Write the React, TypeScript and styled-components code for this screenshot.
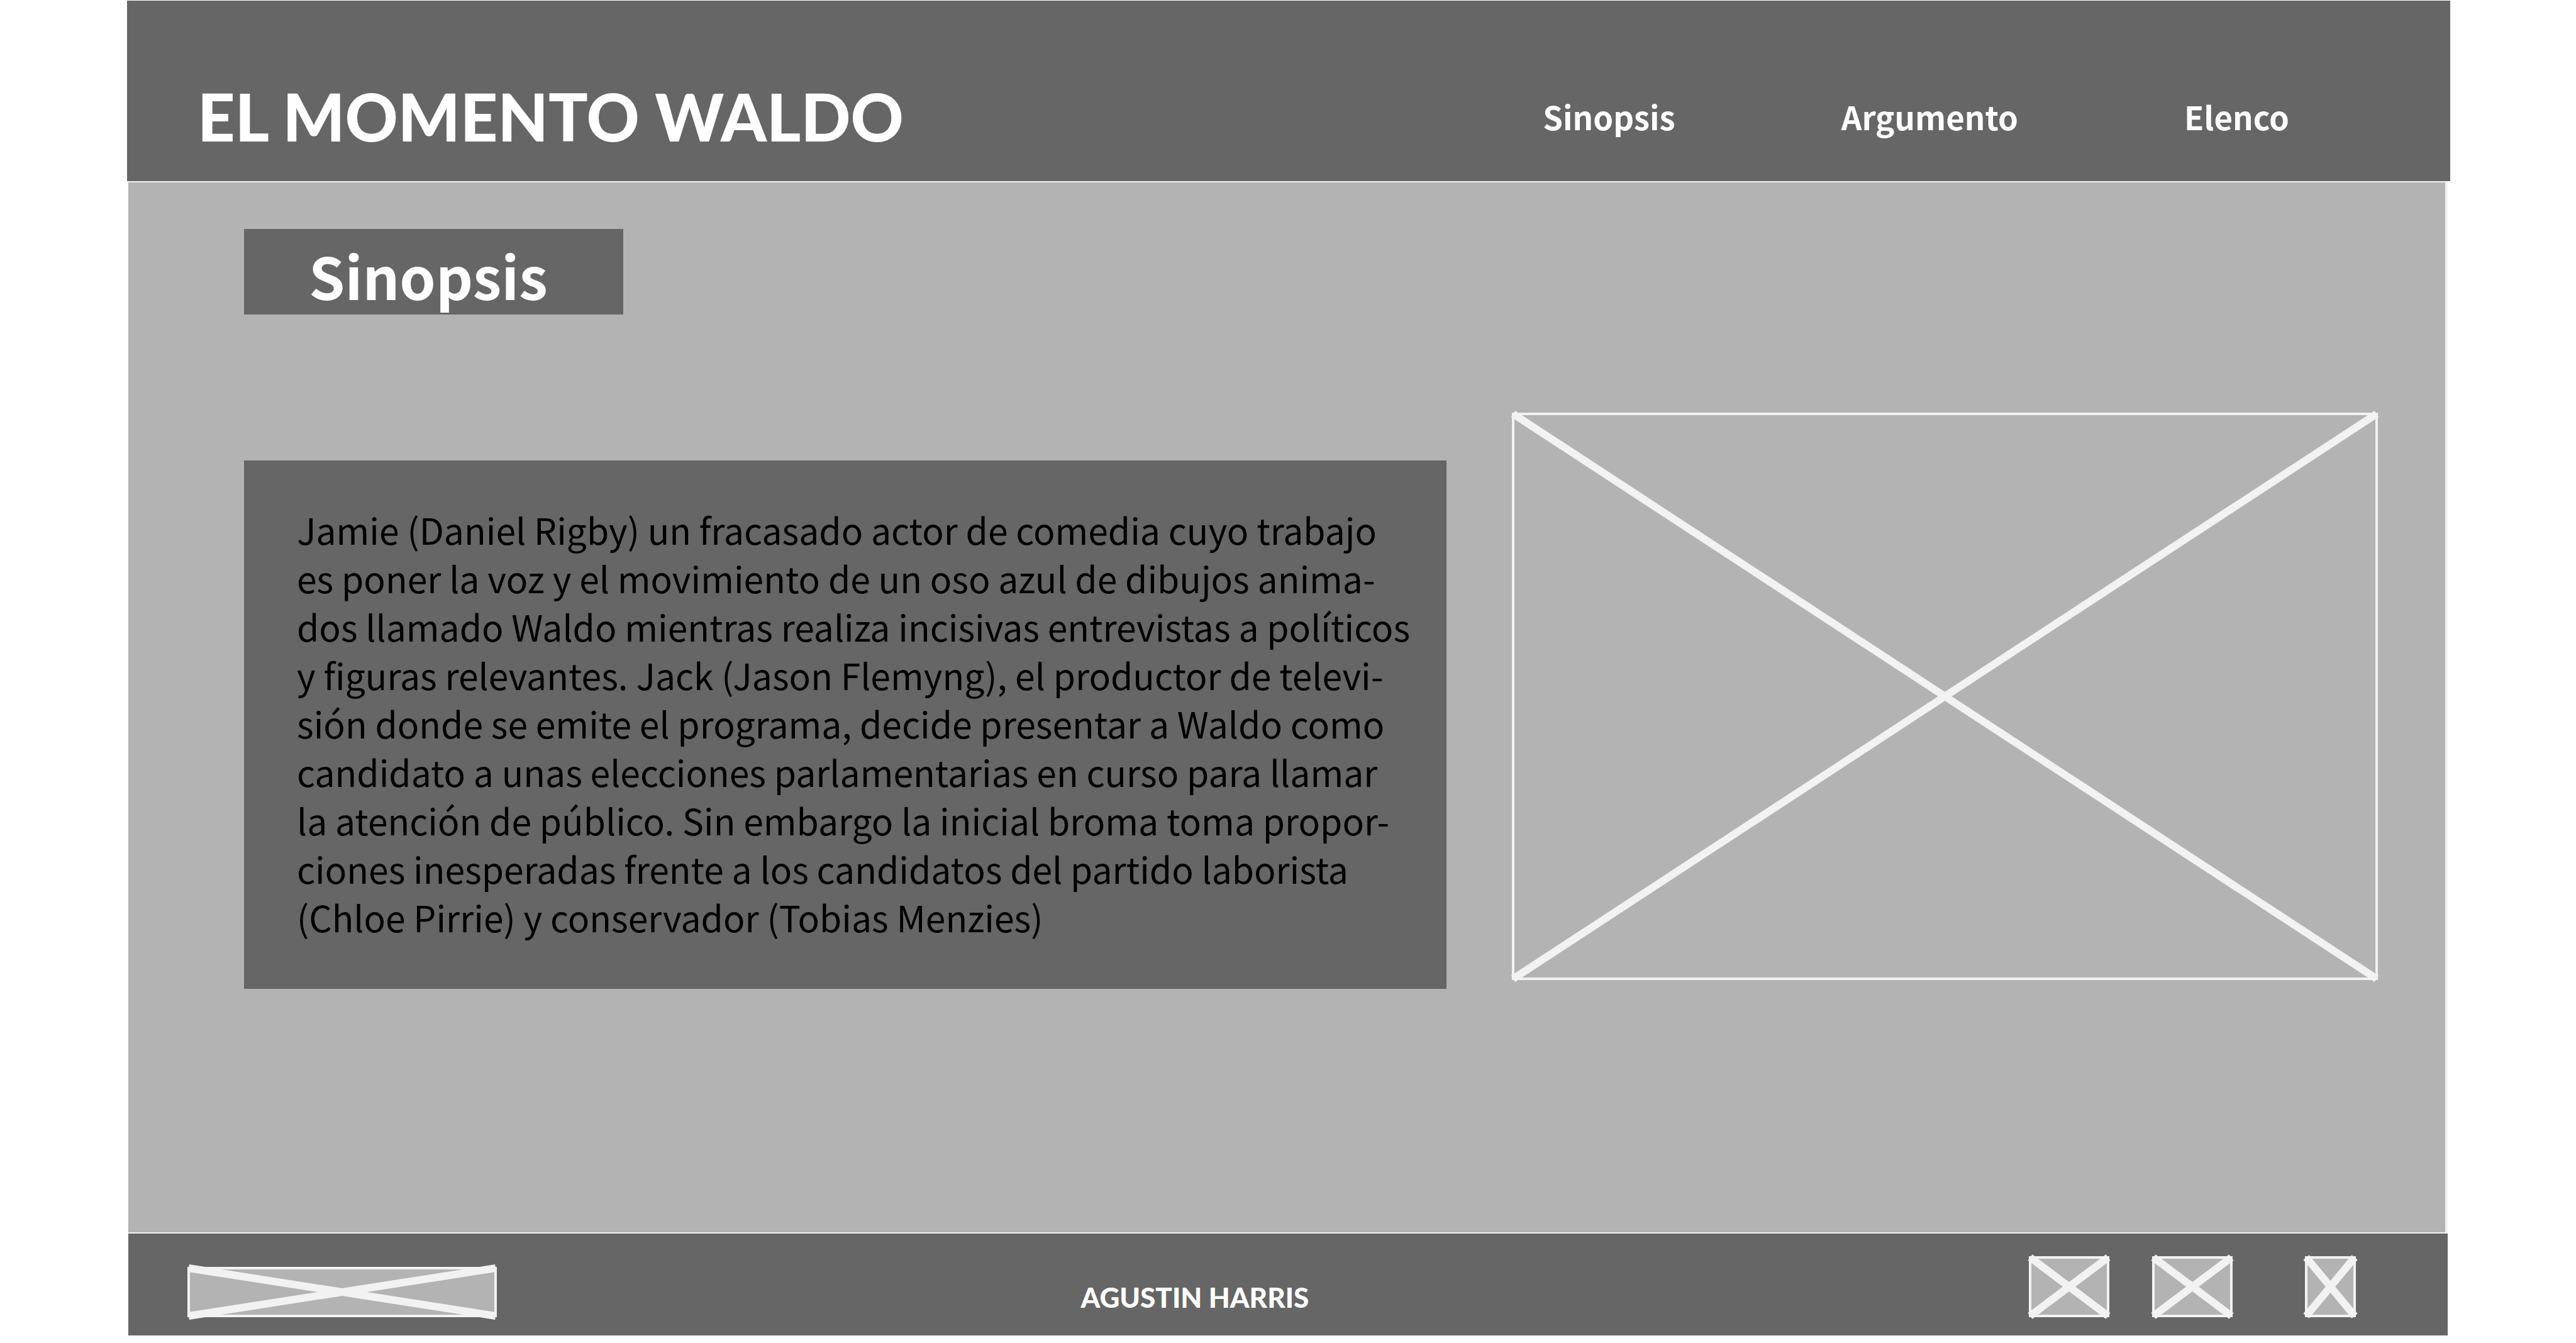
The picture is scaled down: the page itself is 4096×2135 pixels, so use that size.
import React from "react";
import styled, { createGlobalStyle } from "styled-components";

const dark = "#666666";
const mid = "#b3b3b3";
const light = "#f2f2f2";
const display = `Lato, "Open Sans", sans-serif`;
const humanist = `"Noto Sans CJK SC", "Noto Sans", sans-serif`;

const GlobalStyle = createGlobalStyle`
  * { box-sizing: border-box; }
  body { margin: 0; background: #ffffff; }
  h1, h2, p { margin: 0; }
`;

const Page = styled.div`
  display: flex;
  flex-direction: column;
  min-height: 100vh;
  padding: 1px 200px 12px 202px;
`;

const Header = styled.header`
  display: flex;
  align-items: center;
  justify-content: space-between;
  height: 287px;
  padding: 80px 256px 0 112px;
  background: ${dark};
  color: #ffffff;
`;

const Title = styled.h1`
  font: 900 104px/120px ${display};
  white-space: nowrap;
`;

const Nav = styled.nav`
  display: flex;
  gap: 264px;
`;

const NavLink = styled.a`
  color: #ffffff;
  font: 700 51px/64px ${humanist};
  text-decoration: none;
`;

const Main = styled.main`
  flex: 1;
  margin: 0 4px 0 2px;
  padding: 74px 107px 0 184px;
  background: ${mid};
  border: solid ${light};
  border-width: 2px 4px 2px 0;
`;

const SectionTitle = styled.h2`
  width: 603px;
  height: 136px;
  margin-bottom: 156px;
  padding-left: 103px;
  background: ${dark};
  color: #ffffff;
  font: 700 92px/146px ${humanist};
`;

const Content = styled.div`
  display: grid;
  grid-template-columns: minmax(0, 1912fr) minmax(0, 1377fr);
  gap: 104px;
  align-items: start;
`;

const Synopsis = styled.p`
  margin-top: 76px;
  padding: 71px 0 76px 84px;
  background: ${dark};
  color: #000000;
  font: 400 57px/77px ${humanist};
  white-space: nowrap;
`;

const Line = styled.span`
  display: block;
`;

const Frame = styled.svg`
  display: block;
  overflow: visible;
  border: 2px solid ${light};
  box-shadow: inset 0 0 0 2px ${light};
  background: ${mid};
  stroke: ${light};
  stroke-width: 12px;
`;

const Picture = styled(Frame)`
  width: 100%;
  height: auto;
  aspect-ratio: 1377 / 902;
`;

const Logo = styled(Frame)`
  width: 492px;
  height: 80px;
`;

const Icon = styled(Frame)<{ $narrow?: boolean }>`
  width: ${(p) => (p.$narrow ? 81 : 128)}px;
  height: 97px;
`;

const Footer = styled.footer`
  display: grid;
  grid-template-columns: 1420fr 1507fr auto;
  align-items: end;
  height: 162px;
  margin: 0 4px 0 2px;
  padding: 0 146px 29px 94px;
  background: ${dark};
`;

const Author = styled.p`
  color: #ffffff;
  font: 900 44px/64px ${display};
`;

const IconLinks = styled.div`
  display: flex;
  gap: 68px;

  a:last-child {
    margin-left: 47px;
  }
`;

const Cross = () => (
  <>
    <line x1="0" y1="0" x2="100%" y2="100%" />
    <line x1="0" y1="100%" x2="100%" y2="0" />
  </>
);

const lines = [
  "Jamie (Daniel Rigby) un fracasado actor de comedia cuyo trabajo",
  "es poner la voz y el movimiento de un oso azul de dibujos anima-",
  "dos llamado Waldo mientras realiza incisivas entrevistas a políticos",
  "y figuras relevantes. Jack (Jason Flemyng), el productor de televi-",
  "sión donde se emite el programa, decide presentar a Waldo como",
  "candidato a unas elecciones parlamentarias en curso para llamar",
  "la atención de público. Sin embargo la inicial broma toma propor-",
  "ciones inesperadas frente a los candidatos del partido laborista",
  "(Chloe Pirrie) y conservador (Tobias Menzies)",
];

export default function App() {
  return (
    <Page>
      <GlobalStyle />
      <Header>
        <Title>EL MOMENTO WALDO</Title>
        <Nav>
          <NavLink href="#sinopsis">Sinopsis</NavLink>
          <NavLink href="#argumento">Argumento</NavLink>
          <NavLink href="#elenco">Elenco</NavLink>
        </Nav>
      </Header>
      <Main>
        <SectionTitle id="sinopsis">Sinopsis</SectionTitle>
        <Content>
          <Synopsis>
            {lines.map((line) => (
              <Line key={line}>{line}</Line>
            ))}
          </Synopsis>
          <Picture><Cross /></Picture>
        </Content>
      </Main>
      <Footer>
        <Logo><Cross /></Logo>
        <Author>AGUSTIN HARRIS</Author>
        <IconLinks>
          <a href="#red-1"><Icon><Cross /></Icon></a>
          <a href="#red-2"><Icon><Cross /></Icon></a>
          <a href="#red-3"><Icon $narrow><Cross /></Icon></a>
        </IconLinks>
      </Footer>
    </Page>
  );
}
